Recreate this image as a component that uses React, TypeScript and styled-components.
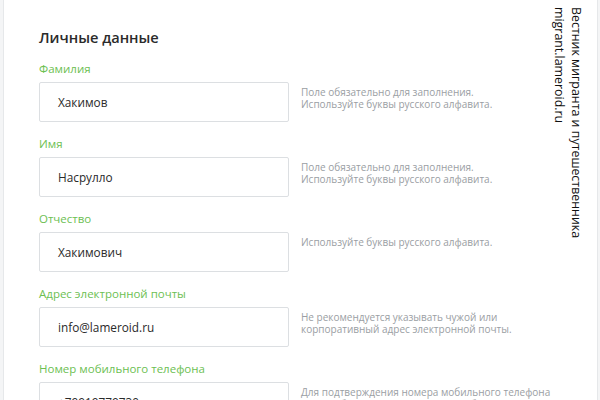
import React from "react";
import styled, { createGlobalStyle } from "styled-components";

const Global = createGlobalStyle`
  html, body { margin: 0; padding: 0; background: #f4f5f6; }
  body { font-family: "Open Sans", "Noto Sans", sans-serif; }
  * { box-sizing: border-box; }
`;

const Page = styled.div`
  position: relative;
  width: 600px;
  height: 400px;
  overflow: hidden;
  padding: 0 2px 0 3px;
`;

const Card = styled.div`
  height: 100%;
  background: #fff;
  border-left: 1px solid #e6e8ea;
  border-right: 1px solid #e6e8ea;
  padding: 27px 0 0 35px;
`;

const Title = styled.h2`
  margin: 0 0 14px;
  font-family: "Open Sans", sans-serif;
  font-size: 14.6px;
  line-height: 20px;
  font-weight: 600;
  color: #2b2b2b;
`;

const Field = styled.div`
  display: grid;
  grid-template-columns: 250px 270px;
  column-gap: 12px;
  margin-bottom: 14px;
`;

const Label = styled.div`
  grid-column: 1 / 3;
  font-size: 11.5px;
  line-height: 15px;
  color: #6cc052;
  margin-bottom: 6px;
`;

const Input = styled.div`
  height: 40px;
  border: 1px solid #dcdfe2;
  border-radius: 2px;
  display: flex;
  align-items: center;
  padding-left: 18px;
  font-size: 11.8px;
  color: #2a2a2a;
`;

const Hint = styled.div`
  padding-top: 4px;
  font-size: 10px;
  line-height: 12px;
  color: #9a9ea3;
`;

const Watermark = styled.div`
  position: absolute;
  top: 7px;
  right: 15px;
  writing-mode: vertical-rl;
  font-family: "Open Sans", sans-serif;
  font-size: 12.4px;
  line-height: 17px;
  color: #111;
`;

const fields = [
  { label: "Фамилия", value: "Хакимов", hint: ["Поле обязательно для заполнения.", "Используйте буквы русского алфавита."] },
  { label: "Имя", value: "Насрулло", hint: ["Поле обязательно для заполнения.", "Используйте буквы русского алфавита."] },
  { label: "Отчество", value: "Хакимович", hint: ["Используйте буквы русского алфавита."] },
  { label: "Адрес электронной почты", value: "info@lameroid.ru", hint: ["Не рекомендуется указывать чужой или", "корпоративный адрес электронной почты."] },
  { label: "Номер мобильного телефона", value: "+79919779730", hint: ["Для подтверждения номера мобильного телефона", "на него будет отправлено SMS-сообщение."] },
];

export default function App() {
  return (
    <>
      <Global />
      <Page>
        <Card>
          <Title>Личные данные</Title>
          {fields.map((f) => (
            <Field key={f.label}>
              <Label>{f.label}</Label>
              <Input>{f.value}</Input>
              <Hint>
                {f.hint.map((h) => (
                  <div key={h}>{h}</div>
                ))}
              </Hint>
            </Field>
          ))}
        </Card>
        <Watermark>
          <div>Вестник мигранта и путешественника</div>
          <div>migrant.lameroid.ru</div>
        </Watermark>
      </Page>
    </>
  );
}
